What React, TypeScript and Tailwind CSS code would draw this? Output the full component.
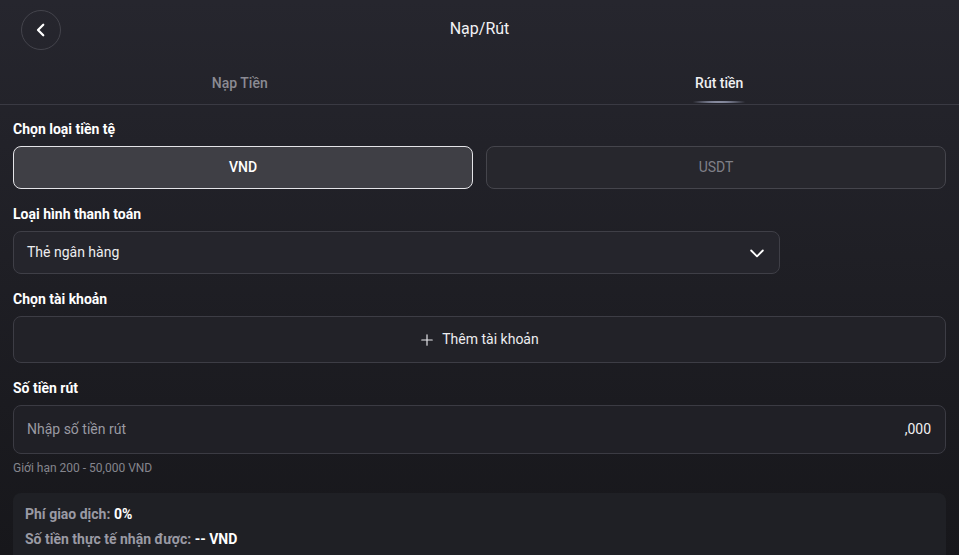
import React from "react";

export default function App() {
  const font = { fontFamily: "Roboto, 'Noto Sans', sans-serif" };
  return (
    <div
      className="w-[959px] h-[555px] overflow-hidden bg-gradient-to-b from-[#26262e] to-[#17171b] text-white"
      style={font}
    >
      {/* Header */}
      <div className="relative h-[58px] flex items-center justify-center">
        <button className="absolute left-[21px] top-[10px] w-[40px] h-[40px] rounded-full border border-[#44444c] flex items-center justify-center">
          <svg width="18" height="18" viewBox="0 0 24 24" fill="none" stroke="white" strokeWidth="3" strokeLinecap="round" strokeLinejoin="round">
            <path d="M15 5l-7 7 7 7" />
          </svg>
        </button>
        <div className="text-[16px] text-[#f2f2f5]">Nạp/Rút</div>
      </div>

      {/* Tabs */}
      <div className="flex h-[47px] border-b border-[#3a3a43]">
        <div className="flex-1 flex items-center justify-center text-[14px] text-[#8b8b93] font-medium pt-[4px]">
          Nạp Tiền
        </div>
        <div className="relative flex-1 flex items-center justify-center text-[14px] text-[#f0f0f2] font-medium pt-[4px]">
          Rút tiền
          <div className="absolute bottom-[1px] left-1/2 -translate-x-1/2 w-[56px] h-[2px] rounded-full bg-[radial-gradient(ellipse_at_center,_#d8dbe8_0%,_#7c8094_40%,_transparent_75%)]" />
        </div>
      </div>

      {/* Content */}
      <div className="px-[13px] pt-[14px]">
        <div className="text-[14px] font-bold leading-[20px] text-white">Chọn loại tiền tệ</div>
        <div className="mt-[7px] grid grid-cols-2 gap-[13px]">
          <div className="h-[43px] rounded-[8px] border border-[#e4e4e8] bg-[#3f3f45] flex items-center justify-center text-[14px] font-medium text-white">
            VND
          </div>
          <div className="h-[43px] rounded-[8px] border border-[#45454c] bg-[#27272d] flex items-center justify-center text-[14px] text-[#808088]">
            USDT
          </div>
        </div>

        <div className="mt-[15px] text-[14px] font-bold leading-[20px]">Loại hình thanh toán</div>
        <div className="mt-[7px] w-[767px] h-[43px] rounded-[8px] border border-[#3f3f47] bg-[#25252c] flex items-center justify-between pl-[13px] pr-[12px]">
          <span className="text-[14px] text-[#ededf0]">Thẻ ngân hàng</span>
          <svg width="20" height="20" viewBox="0 0 24 24" fill="none" stroke="white" strokeWidth="2.2" strokeLinecap="round" strokeLinejoin="round">
            <path d="M5 9l7 7 7-7" />
          </svg>
        </div>

        <div className="mt-[15px] text-[14px] font-bold leading-[20px]">Chọn tài khoản</div>
        <div className="mt-[7px] h-[47px] rounded-[8px] border border-[#3d3d45] bg-[#222228] flex items-center justify-center gap-[8px] text-[14px] text-[#ededf0]">
          <svg width="14" height="14" viewBox="0 0 24 24" fill="none" stroke="#e8e8ec" strokeWidth="2" strokeLinecap="round">
            <path d="M12 3v18M3 12h18" />
          </svg>
          <span>Thêm tài khoản</span>
        </div>

        <div className="mt-[15px] text-[14px] font-bold leading-[20px]">Số tiền rút</div>
        <div className="mt-[7px] h-[49px] rounded-[8px] border border-[#3b3b43] bg-[#202026] flex items-center justify-between pl-[13px] pr-[14px]">
          <span className="text-[14px] text-[#9a9aa2]">Nhập số tiền rút</span>
          <span className="text-[14px] text-[#f0f0f2]">,000</span>
        </div>
        <div className="mt-[6px] text-[12px] text-[#85858d] leading-[16px]">Giới hạn 200 - 50,000 VND</div>

        <div className="mt-[17px] rounded-[8px] bg-[#1f2025] px-[12px] pt-[11px] h-[80px]">
          <div className="text-[14px] font-bold text-[#9a9aa4] leading-[20px]">
            Phí giao dịch: <span className="text-white">0%</span>
          </div>
          <div className="mt-[5px] text-[14px] font-bold text-[#9a9aa4] leading-[20px]">
            Số tiền thực tế nhận được: <span className="text-white">-- VND</span>
          </div>
        </div>
      </div>
    </div>
  );
}
